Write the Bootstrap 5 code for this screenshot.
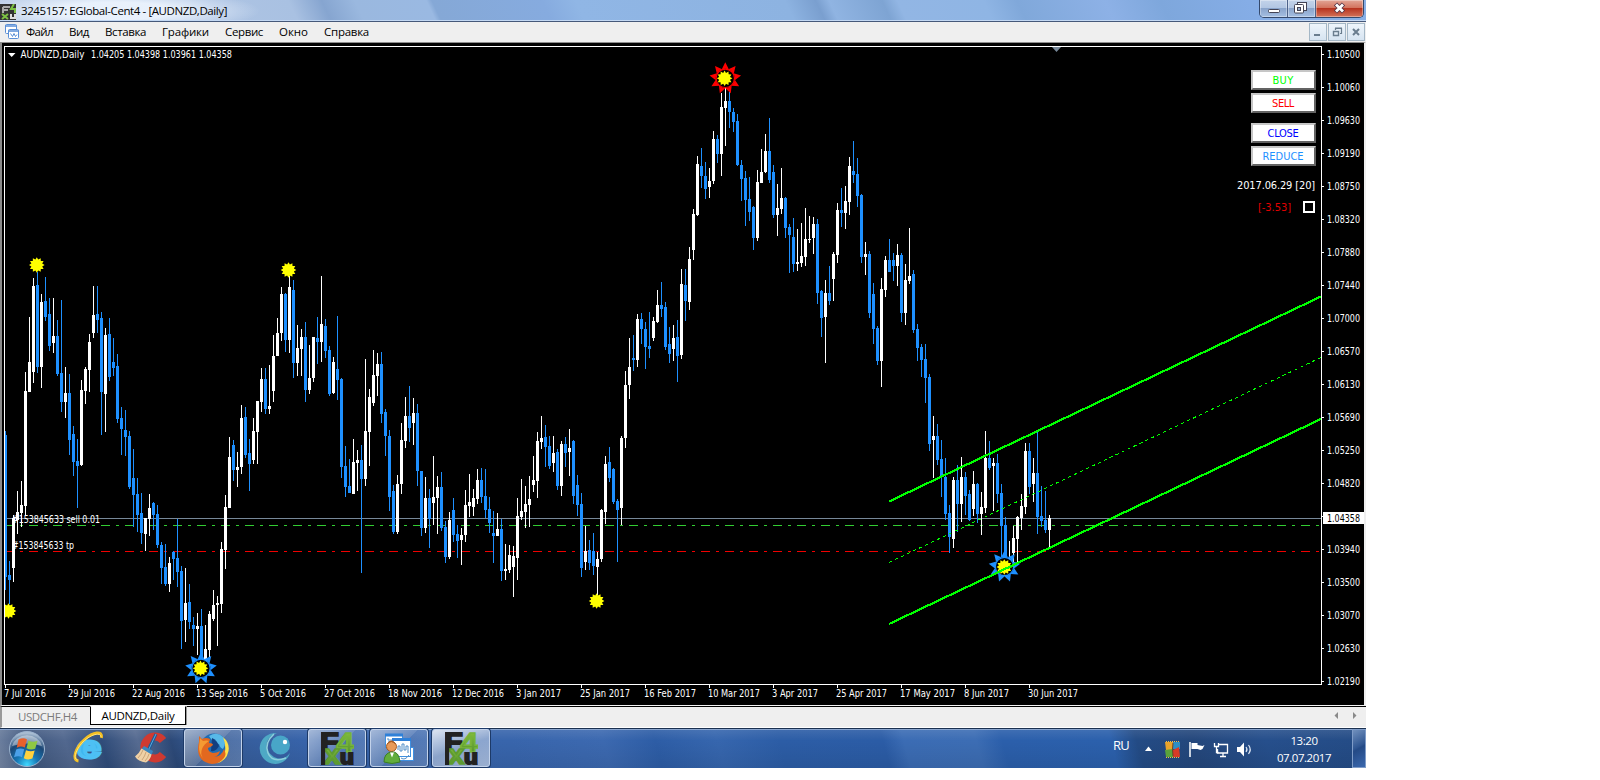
<!DOCTYPE html>
<html lang="ru">
<head>
    <meta charset="UTF-8">
    <meta name="viewport" content="width=device-width, initial-scale=1.0">
    <title>3245157: EGlobal-Cent4 - [AUDNZD,Daily]</title>
    <link href="https://cdn.jsdelivr.net/npm/bootstrap@5.3.0/dist/css/bootstrap.min.css" rel="stylesheet">
    <style>
        body {
            font-family: "Open Sans", "Noto Sans", sans-serif;
            font-size: 11.5px;
            line-height: 1;
            color: #000;
            background: #fff;
        }
        .desktop {
            width: 1366px;
            height: 768px;
            overflow: hidden;
        }
        .fit {
            display: inline-block;
            white-space: nowrap;
        }
        svg {
            display: block;
            flex: none;
        }

        /* window caption */
        .titlebar {
            height: 22px;
            border-bottom: 1px solid #46597a;
            box-shadow: inset 0 -1px #c3d8f3;
            background:
                radial-gradient(ellipse 145px 22px at 115px 11px, rgba(235,243,253,.95) 40%, rgba(225,236,250,0) 100%),
                linear-gradient(65deg, #b9cbe6 0, #a9c1e2 270px, #86a5d0 300px, #9ab8df 330px, #9ab9e2 395px, #85a8d6 400px, #86abdf 500px, #90b6e5 530px, #8db3e1 720px, #7a9fcf 748px, #90b4e2 760px, #7ea4d3 808px, #92b6e4 822px, #8fb5e4 900px, #80a8da 930px, #8db1e6 1010px, #7ea7dc 1060px, #85ade6 1140px, #8db2e6 1366px);
        }
        .title-text {
            padding: 5px 0 0 5px;
        }
        .caption-box {
            height: 18px;
            margin-right: 2px;
            border: 1px solid #34496c;
            border-top: 0;
            border-radius: 0 0 5px 5px;
            overflow: hidden;
        }
        .cap-btn {
            width: 28px;
            height: 17px;
            border-right: 1px solid #4c6189;
            background: linear-gradient(#c3d3ea 0, #b3c7e3 45%, #8aa4cb 50%, #a5bfe2 100%);
            box-shadow: inset 0 0 0 1px rgba(255,255,255,.35);
        }
        .cap-close {
            width: 47px;
            border-right: 0;
            background: linear-gradient(#e2a697 0, #d3745f 45%, #b73420 50%, #d3735a 100%);
        }

        /* menu */
        .menubar {
            height: 20px;
            background: #efefef;
        }
        .menubar .fit {
            margin-right: 16px;
        }
        .mdi-btns {
            gap: 1px;
            margin-right: 1px;
        }
        .mdi-btn {
            width: 18px;
            height: 18px;
            border: 1px solid #a4b7c6;
            background: linear-gradient(#eef5fb, #d6e4f1);
        }

        /* chart */
        .chart-frame {
            height: 664px;
            border-top: 1px solid #8d8d8d;
            border-left: 2px solid #8a8a8a;
            border-right: 2px solid #efefef;
            border-bottom: 1px solid #f4f4f4;
            background: #000;
        }
        .chart-text {
            font-family: "DejaVu Sans Condensed", "DejaVu Sans", sans-serif;
            font-stretch: condensed;
            font-size: 10px;
            fill: #fff;
        }
        .trade-panel {
            position: absolute;
            top: 27px;
            right: 48px;
            width: 90px;
            font-family: "DejaVu Sans Condensed", "DejaVu Sans", sans-serif;
            font-stretch: condensed;
            font-size: 11px;
            color: #fff;
        }
        .trade-btn {
            width: 65px;
            height: 20px;
            padding-right: 1px;
            background: #fff;
            border: 2px solid;
            border-color: #c6c6c6 #636363 #636363 #c6c6c6;
        }
        .panel-info {
            margin-right: 1px;
        }
        .gap-3px {
            margin-bottom: 3px;
        }
        .gap-10px {
            margin-bottom: 10px;
        }
        .clr-buy { color: #0f0; }
        .clr-sell { color: #f00; }
        .clr-close { color: #00f; }
        .clr-reduce { color: #1e90ff; }
        .clr-loss { color: #e00000; }
        .opt-box {
            width: 12px;
            height: 12px;
            border: 2px solid #fff;
        }

        /* chart tabs */
        .chart-tabs {
            height: 22px;
            background: #efefef;
            border-top: 1px solid #000;
            border-left: 2px solid #999;
            border-bottom: 1px solid #fff;
        }
        .tab-idle {
            width: 88px;
            height: 19px;
            color: #7b7b7b;
        }
        .tab-live {
            width: 96px;
            height: 19px;
            margin-top: -1px;
            background: #fff;
            border: 1px solid #000;
            border-top-color: #fff;
            box-shadow: 1px 0 #999;
        }

        /* taskbar */
        .taskbar {
            height: 40px;
            border-top: 1px solid #1b3150;
            box-shadow: inset 0 1px #8aa6cf;
            background:
                linear-gradient(rgba(255,255,255,.10), rgba(255,255,255,0) 30%, rgba(0,0,0,.08)),
                linear-gradient(75deg, #7587a5 0, #40587f 35px, #52688f 70px, #2f4c7a 105px, #566b91 140px, #2c4978 172px, #355a94 200px, #3763a9 300px, #3865ac 500px, #3c69b0 590px, #2d5da6 640px, #3666ae 700px, #2c5da6 760px, #2b5ca6 860px, #3b6cb4 880px, #3c6db4 950px, #2b5fab 975px, #2b60ac 1080px, #234b85 1105px, #24477c 1160px, #264f8c 1230px, #234a83 1366px);
        }
        .task-slot {
            width: 58px;
            height: 38px;
            margin: 0 4px 0 0;
        }
        .task-open {
            border: 1px solid #c2d2ea;
            border-radius: 3px;
            box-shadow: 0 0 0 1px #1d3a68;
            background: linear-gradient(135deg, rgba(255,255,255,.5), rgba(255,255,255,.22) 50%, rgba(255,255,255,.12) 51%, rgba(255,255,255,.18));
        }
        .task-active {
            background: linear-gradient(160deg, rgba(255,255,255,.8), rgba(255,255,255,.42) 50%, rgba(255,255,255,.5));
        }
        .start-slot {
            width: 60px;
            padding-left: 8px;
        }
        .tray {
            color: #fff;
        }
        .lang {
            margin: 10px 16px 0 0;
            font-size: 13px;
        }
        .clock {
            width: 78px;
            padding-top: 3px;
            line-height: 17px;
        }
        .show-desktop {
            width: 14px;
            margin-left: 9px;
            border: 1px solid #7f9cc8;
            background: linear-gradient(150deg, #7190bd, #2f5692 45%, #244a86 50%, #3b68ae);
        }
    </style>
</head>
<body>
    <!-- shared symbols -->
    <svg width="0" height="0" class="position-absolute">
        <defs>
            <linearGradient id="leaf" x1="0" y1="0" x2="0" y2="1">
                <stop offset="0" stop-color="#8cc63f"/>
                <stop offset="1" stop-color="#4c8a2c"/>
            </linearGradient>
            <symbol id="fxLogo" viewBox="0 0 32 32">
                <g font-family="Liberation Sans, sans-serif" font-weight="bold">
                    <text x="-1" y="17" font-size="23" fill="#222" stroke="#222" stroke-width="2" textLength="18" lengthAdjust="spacingAndGlyphs">F</text>
                    <text x="15" y="19" font-size="26" fill="url(#leaf)" stroke="#76b43a" stroke-width="1.400" textLength="17" lengthAdjust="spacingAndGlyphs">4</text>
                    <text x="3" y="31.500" font-size="26" fill="url(#leaf)" stroke="#5d9b31" stroke-width="1.600" textLength="16" lengthAdjust="spacingAndGlyphs">x</text>
                    <text x="18.500" y="31" font-size="20" fill="#222" stroke="#222" stroke-width="2" textLength="13.500" lengthAdjust="spacingAndGlyphs">u</text>
                </g>
                <rect x="0" y="15" width="4" height="17" fill="#222"/>
            </symbol>
        </defs>
    </svg>

    <div class="desktop d-flex flex-column">
        <!-- Caption -->
        <div class="titlebar d-flex justify-content-between align-items-start">
            <div class="d-flex">
                <svg width="16" height="16" class="mt-1"><rect width="16" height="16" fill="#333"/><path d="M3 3h7M3 3v6M3 6h5" stroke="#aaa" stroke-width="2" fill="none"/><path d="M14 0l-3 5h4v4M2 10l6 5M8 10l-6 5" stroke="#7cc142" stroke-width="2" fill="none"/><path d="M11 10v4h4v-4" stroke="#ddd" stroke-width="2" fill="none"/></svg>
                <span class="fit title-text" data-w="206">3245157: EGlobal-Cent4 - [AUDNZD,Daily]</span>
            </div>
            <div class="caption-box d-flex">
                <div class="cap-btn"><svg width="27" height="17"><rect x="8.500" y="9.500" width="11" height="3" rx="1" fill="#fff" stroke="#445"/></svg></div>
                <div class="cap-btn"><svg width="27" height="17"><rect x="9.500" y="2.500" width="9" height="8" fill="#fff" stroke="#445"/><rect x="6.500" y="4.500" width="9" height="8.500" rx="1" fill="#fff" stroke="#445"/><rect x="9.500" y="7.500" width="3" height="3" fill="#9bb0d0" stroke="#445"/></svg></div>
                <div class="cap-btn cap-close"><svg width="47" height="17"><path d="M19.500 4l8 8M27.500 4l-8 8" stroke="#534" stroke-width="4.500"/><path d="M20 4.500l7 7M27 4.500l-7 7" stroke="#fff" stroke-width="2.800"/></svg></div>
            </div>
        </div>

        <!-- Menu -->
        <div class="menubar d-flex justify-content-between align-items-center">
            <div class="d-flex align-items-center">
                <svg width="26" height="16"><g fill="#fff" stroke="#5a8fd6"><rect x="5.500" y=".5" width="11" height="9" rx="1"/><rect x="8.500" y="5.500" width="10" height="9" rx="1"/></g><path d="M5 2h12M8 7h11" stroke="#5a8fd6" stroke-width="1.500"/><path d="M10.500 9.500l2 3 1.500-3 1.500 3 1.500-2" fill="none" stroke="#5a8fd6"/></svg>
                <span class="fit" data-w="27">Файл</span>
                <span class="fit" data-w="20">Вид</span>
                <span class="fit" data-w="41">Вставка</span>
                <span class="fit" data-w="47">Графики</span>
                <span class="fit" data-w="38">Сервис</span>
                <span class="fit" data-w="29">Окно</span>
                <span class="fit" data-w="45">Справка</span>
            </div>
            <div class="mdi-btns d-flex">
                <div class="mdi-btn"><svg width="16" height="16"><path d="M4 11h6" stroke="#6a7d8e" stroke-width="2"/></svg></div>
                <div class="mdi-btn"><svg width="16" height="16"><path d="M6.500 6V4.500h6v5H11M6 4h7" fill="none" stroke="#6a7d8e" stroke-width="1.200"/><path d="M4.500 7.500h5v4h-5zM4 7.500h6" fill="none" stroke="#6a7d8e" stroke-width="1.400"/></svg></div>
                <div class="mdi-btn"><svg width="16" height="16"><path d="M5 5l6 6M11 5l-6 6" stroke="#6a7d8e" stroke-width="2"/></svg></div>
            </div>
        </div>

        <!-- Chart -->
        <div class="chart-frame position-relative">
            <svg id="chart" width="1362" height="662" viewBox="2 43 1362 662"></svg>
            <div class="trade-panel d-flex flex-column align-items-end">
                <div class="trade-btn clr-buy gap-3px d-flex align-items-center justify-content-center"><span class="fit" data-w="21">BUY</span></div>
                <div class="trade-btn clr-sell gap-10px d-flex align-items-center justify-content-center"><span class="fit" data-w="22">SELL</span></div>
                <div class="trade-btn clr-close gap-3px d-flex align-items-center justify-content-center"><span class="fit" data-w="31">CLOSE</span></div>
                <div class="trade-btn clr-reduce gap-10px d-flex align-items-center justify-content-center"><span class="fit" data-w="41">REDUCE</span></div>
                <span class="fit panel-info gap-10px mt-1" data-w="78">2017.06.29 [20]</span>
                <div class="panel-info d-flex align-items-center">
                    <span class="fit clr-loss me-2 pe-1" data-w="33">[-3.53]</span>
                    <div class="opt-box"></div>
                </div>
            </div>
        </div>

        <!-- Chart tabs -->
        <div class="chart-tabs d-flex justify-content-between">
            <div class="d-flex">
                <div class="tab-idle d-flex align-items-center ps-3"><span class="fit" data-w="59">USDCHF,H4</span></div>
                <div class="tab-live d-flex align-items-center justify-content-center"><span class="fit" data-w="73">AUDNZD,Daily</span></div>
            </div>
            <svg width="36" height="20"><path d="M8 5v7L4.500 8.500zM23 5v7l3.500-3.500z" fill="#8a8a8a"/></svg>
        </div>

        <!-- Taskbar -->
        <div class="taskbar d-flex justify-content-between">
            <div class="d-flex">
                <div class="start-slot d-flex align-items-center">
                    <svg width="38" height="38">
                        <defs><radialGradient id="orb" cx=".5" cy=".95" r=".9"><stop offset="0" stop-color="#3fd8ff"/><stop offset=".35" stop-color="#1576b4"/><stop offset=".7" stop-color="#1c4775"/><stop offset="1" stop-color="#a9bdd2"/></radialGradient></defs>
                        <circle cx="19" cy="19" r="17.500" fill="url(#orb)" stroke="#9db4cf"/>
                        <path d="M4 16a15.500 14.500 0 0 1 30 0q-15-5-30 0z" fill="#fff" opacity=".4"/>
                        <path d="M10.500 9.500q5-2.500 8.500 0l-2.200 8q-4-2-8 .2z" fill="#e8612c"/>
                        <path d="M20.500 10.500q4 2.300 9 .3l-2.300 8q-4.500 1.700-8.700-.5z" fill="#8fc843"/>
                        <path d="M8.200 19.500q4-2 8-.2l-2.200 8q-3.500-2-8 0z" fill="#4ba0e8"/>
                        <path d="M18 20.200q4.500 2 8.700.4l-2.300 8q-4.500 1.800-8.600-.4z" fill="#ffd23e"/>
                    </svg>
                </div>
                <div class="task-slot d-flex align-items-center justify-content-center">
                    <svg width="34" height="38" overflow="visible">
                        <text x="5" y="29" font-family="Liberation Sans, sans-serif" font-weight="bold" font-size="32" fill="#3fb6ee" stroke="#4dc0f4" stroke-width="3" textLength="24" lengthAdjust="spacingAndGlyphs">e</text>
                        <path d="M6.500 32C-1 31 4 18 12.500 10.500S31 1 29.500 9" fill="none" stroke="#f4bf22" stroke-width="2.800"/>
                        <path d="M5.500 31C0 30 5 18 12.500 11.500S29 3 29 8" fill="none" stroke="#ffe477" stroke-width="1"/>
                    </svg>
                </div>
                <div class="task-slot d-flex align-items-center justify-content-center">
                    <svg width="34" height="34">
                        <path d="M29 9.500A10.500 11 0 1 0 29 23.500" fill="none" stroke="#cf3a31" stroke-width="8"/>
                        <path d="M22 3l-8 17" stroke="#1c5b96" stroke-width="3"/>
                        <path d="M22 3l-8 17" stroke="#5ba7dc" stroke-width="1"/>
                        <path d="M10 15l9 5-1.500 4-10-6z" fill="#3a86bf"/>
                        <path d="M7.500 17.500l10 6q-1 5-5.500 8-8-1-11-6 4-3 6.500-8z" fill="#f0d1a6"/>
                        <path d="M9 19q-2 5-5 8M12 21q-1 4-4 8M15 23q-1 4-4 7" stroke="#cda577" fill="none"/>
                    </svg>
                </div>
                <div class="task-slot task-open d-flex align-items-center justify-content-center">
                    <svg width="32" height="32">
                        <circle cx="17" cy="15" r="13.500" fill="#1f6cb4"/>
                        <path d="M12 4q8-5 14 1 4 6 0 12-3-1-4-5-6-1-10-8z" fill="#58b9e8"/>
                        <path d="M15 6q5 2 7 8-3 6-8 5z" fill="#123f80"/>
                        <path d="M26 5q7 6 5.500 14-2 10-12 12.500 8-4 8.500-12 1-7-2-14.500z" fill="#ffe14a"/>
                        <path d="M2 4l3 3q4-2 8 0l-1 4q4 0 4 2-2 2-5 3 0 4 5 5 4 0 7-2-1 5-6 6 8-1 10-8 3 5 0 9-5 6-12 6Q1 30 1 17q0-4 1-7z" fill="#e2681f"/>
                        <path d="M3 6l3 3q4-1 6 0-5 3-7 8-2 5 1 9-4-4-4-11z" fill="#f59a32"/>
                    </svg>
                </div>
                <div class="task-slot d-flex align-items-center justify-content-center">
                    <svg width="32" height="32">
                        <path d="M18 1A15.500 15.500 0 1 0 31 21Q24 30 15 25 6 19 8 10 11 3 18 1z" fill="#4ea9c5"/>
                        <path d="M15 2Q5 11 9 21T27 26" fill="none" stroke="#8fd0dc" stroke-width="1.500"/>
                        <circle cx="21.500" cy="13" r="9.500" fill="#48a6c8"/>
                        <circle cx="26" cy="10" r="2.200" fill="#fff"/>
                    </svg>
                </div>
                <div class="task-slot task-open d-flex align-items-center justify-content-center">
                    <svg width="33" height="33"><use href="#fxLogo"/></svg>
                </div>
                <div class="task-slot task-open d-flex align-items-center justify-content-center">
                    <svg width="32" height="32">
                        <g fill="#fff" stroke="#3f8fdf"><rect x="2.500" y="2.500" width="17" height="13"/><rect x="14.500" y="15.500" width="16" height="13"/><rect x="9.500" y="6.500" width="18" height="18"/></g>
                        <path d="M2 3h18M9 7.500h19" stroke="#2f80d8" stroke-width="3"/>
                        <path d="M4 7h2v5M8 7v4M15 18v-4h2v5h2v-7h2v6h2v-4h2v7M18 26q4 3 8-3" fill="none" stroke="#5590c8"/>
                        <circle cx="8.500" cy="14.500" r="5" fill="#e89a58" stroke="#a65a22"/>
                        <path d="M4 13q4-6 9 0-2-5-5-4.500T4 13z" fill="#a65a22"/>
                        <path d="M1 30q0-9 7.500-10t8.500 10q-8 3-16 0z" fill="#62ad3c" stroke="#3c7f25"/>
                        <path d="M7 20.500l2 5 2-5z" fill="#fff"/>
                    </svg>
                </div>
                <div class="task-slot task-open task-active d-flex align-items-center justify-content-center">
                    <svg width="33" height="33"><use href="#fxLogo"/></svg>
                </div>
            </div>
            <div class="tray d-flex">
                <span class="fit lang" data-w="16">RU</span>
                <svg width="19" height="39"><path d="M0 22L3.500 17.500 7 22z" fill="#fff"/></svg>
                <svg width="25" height="39">
                    <path d="M1 13h8v8H2z" fill="#e8a32c"/><path d="M9 13h7v7H9z" fill="#2d8fc4"/>
                    <path d="M1 21l8-1v8H2z" fill="#5aa33b"/><path d="M9 21l6-3 1 10H9z" fill="#d83a26"/>
                    <path d="M2 12.500h13M2 28.500h13" stroke="#f0c14a" stroke-dasharray="1 1"/>
                    <path d="M9 14q-1 6 0 13" stroke="#6a3f25" fill="none"/>
                </svg>
                <svg width="24" height="39"><path d="M1 13v15" stroke="#fff" stroke-width="1.500"/><path d="M2.500 14h6v2l5 1 2-1-2 4-2 1-3-1h-6z" fill="#fff"/></svg>
                <svg width="23" height="39"><g fill="none" stroke="#fff" stroke-width="1.300"><path d="M6 15.500h8.500v8.500h-10v-4M7 27.500h6M10 24v3"/><path d="M1.500 14v3.500h4V14M3.500 17.500v6h2"/></g></svg>
                <svg width="29" height="39"><path d="M1 18h3l4-4.500v14L4 23H1z" fill="#fff"/><path d="M10 18q2 2.500 0 5M12.500 16q3.500 4.500 0 9" fill="none" stroke="#dfe8f5" stroke-width="1.200"/></svg>
                <div class="clock text-center"><div><span class="fit" data-w="27">13:20</span></div><div><span class="fit" data-w="54">07.07.2017</span></div></div>
                <div class="show-desktop"></div>
            </div>
        </div>
    </div>

    <script src="https://cdn.jsdelivr.net/npm/bootstrap@5.3.0/dist/js/bootstrap.bundle.min.js"></script>
    <script>
        // Daily bars: colour (w = up, b = down), high, body top, body bottom, low
        const bars = `b431,435,577,590 b561,575,580,604 w515,518,568,582 w491,512,520,534 w481,505,513,527 w372,391,506,516
            w317,362,392,392 w278,286,372,383 b272,285,367,373 w294,302,367,388 b277,301,317,321 b298,314,346,351 w298,336,343,353
            b320,336,374,376 b300,373,402,412 w367,393,402,418 b374,393,440,455 b426,434,462,476 b439,461,466,508 w380,390,465,466
            w367,369,391,404 w334,342,370,392 w286,315,333,338 b286,314,320,333 b312,318,392,435 w328,335,394,432 b318,334,377,381
            b338,362,368,376 b354,366,419,423 b407,418,429,455 b410,430,437,456 b431,436,487,489 b449,478,495,527 b478,494,515,532
            b493,513,533,544 w518,518,534,551 w494,508,519,536 b502,503,515,530 b505,514,545,548 b542,545,568,584 b544,567,584,586
            w557,563,584,592 b551,552,559,580 b519,558,572,587 b566,571,621,649 w568,603,620,642 b584,602,622,629 b617,625,629,646
            w613,626,629,655 b609,626,660,663 w625,649,663,665 w611,614,650,657 w590,605,619,621 w596,603,605,646 w542,549,604,613
            w495,507,550,569 w437,457,508,508 b440,445,470,481 w452,467,470,487 w405,418,467,474 b407,417,455,458 b439,453,464,491
            w418,431,460,464 w401,401,432,464 w368,379,402,412 b368,379,409,414 w365,406,409,414 w335,356,391,402 w318,333,356,356
            w287,294,333,341 b293,294,340,352 w276,287,340,353 b280,290,363,378 w325,348,363,376 w329,337,349,376 b322,337,390,402
            w345,378,390,394 w337,337,378,382 b317,338,342,364 w276,324,342,362 b319,326,351,358 b346,350,394,396 w357,362,393,394
            b316,369,380,400 b378,379,467,478 b446,466,487,497 b459,486,493,493 w439,462,494,494 w450,460,463,491 b445,460,479,573
            w359,431,479,486 w389,397,432,466 w350,375,403,406 w353,364,376,396 b352,364,414,423 b409,412,436,456 b430,436,497,511
            b485,491,532,534 w475,484,532,534 w423,440,484,494 w397,416,441,448 b386,416,428,442 w398,413,423,445 b404,413,471,486
            b471,471,528,536 w477,498,528,533 b489,498,519,548 w456,497,503,525 w476,487,498,534 b472,487,528,531 b521,527,557,563
            w512,520,557,559 b498,510,535,542 b525,534,541,558 w528,535,540,565 w490,505,535,542 w474,502,506,517 w489,498,507,516
            w469,480,499,504 b468,480,497,503 b469,496,510,518 b497,509,523,533 b511,533,536,563 w513,529,536,536 b519,529,571,581
            w544,569,571,580 w545,555,570,573 w546,556,567,597 w498,516,558,580 w479,511,517,520 w486,504,512,528 w476,499,505,527
            w456,480,485,492 w432,441,481,498 w416,438,442,449 b425,437,447,467 b436,446,466,469 w436,453,463,472 b449,452,486,490
            w441,444,486,496 b437,444,453,467 w429,448,452,476 b440,441,496,504 b475,485,505,516 b493,504,568,577 w526,551,562,570
            b540,550,563,570 b533,551,566,575 w552,559,567,595 w509,510,559,562 w456,464,512,524 b447,462,478,482 b468,469,502,504
            b499,501,510,562 w436,438,508,525 w371,385,438,448 w338,367,385,399 b335,358,360,371 w314,319,360,367 b313,319,329,344
            b322,329,347,369 b312,346,349,358 w317,321,338,341 w290,305,322,323 b282,305,309,317 b302,307,347,350 b327,344,354,363
            w325,338,349,361 b320,337,356,382 w269,284,355,359 b269,285,301,321 w247,259,302,310 w209,214,250,260 w156,164,215,216
            b148,166,176,188 b162,176,189,199 w168,181,187,198 w131,139,181,184 b135,139,154,163 w93,107,154,176 w85,101,108,146
            b92,101,112,128 b108,112,122,132 b114,121,165,166 b160,165,179,201 b171,178,200,226 b177,199,212,221 b206,207,238,250
            w170,182,238,241 w149,172,183,183 w134,151,172,173 b118,151,180,183 b165,172,215,218 w184,208,215,236 w168,198,209,214
            b197,198,228,238 b224,227,235,273 b218,237,264,272 w229,262,264,271 w223,256,263,267 w208,239,257,266 w216,239,240,243
            w217,224,238,254 b219,224,293,304 b290,291,318,337 w280,293,317,363 b266,293,301,305 w252,254,279,301 w203,210,255,263
            b188,210,213,227 w186,201,213,229 w157,166,202,215 b141,171,175,183 b158,174,196,207 b194,195,257,263 w242,254,257,275
            b251,254,313,318 b283,294,329,344 b326,328,361,365 w278,289,361,387 w256,260,290,297 b239,260,272,272 b253,260,266,281
            w244,255,266,286 b253,255,313,322 w264,280,313,325 w228,276,281,284 b270,274,330,333 b324,329,348,361 b344,347,360,377
            b344,359,378,403 b374,377,444,451 w416,436,440,478 b424,436,460,465 b440,459,477,497 b458,477,514,520 b505,513,537,553
            w477,480,539,548 b465,480,504,532 w457,477,504,522 b472,477,496,515 b490,494,520,521 w471,484,509,516 b483,484,514,523
            w492,507,514,535 w431,458,508,513 b441,458,468,470 w458,463,466,511 b454,463,494,503 b484,493,526,557 b517,525,560,563
            w541,559,563,566 w526,538,553,563 w516,517,539,562 w494,506,518,530 w443,451,507,514 b443,451,487,494 w458,473,484,502
            b432,473,517,534 b486,516,521,527 b491,520,530,533 w515,518,530,548`.split(/\s+/);

        const prices = ['1.10500', '1.10060', '1.09630', '1.09190', '1.08750', '1.08320', '1.07880', '1.07440', '1.07000', '1.06570',
            '1.06130', '1.05690', '1.05250', '1.04820', '', '1.03940', '1.03500', '1.03070', '1.02630', '1.02190'];
        const dates = [['7 Jul 2016', 42], ['29 Jul 2016', 47], ['22 Aug 2016', 53], ['13 Sep 2016', 52], ['5 Oct 2016', 46],
            ['27 Oct 2016', 51], ['18 Nov 2016', 54], ['12 Dec 2016', 52], ['3 Jan 2017', 45], ['25 Jan 2017', 50], ['16 Feb 2017', 52],
            ['10 Mar 2017', 52], ['3 Apr 2017', 46], ['25 Apr 2017', 51], ['17 May 2017', 55], ['8 Jun 2017', 45], ['30 Jun 2017', 50]];

        const label = (x, y, text, width, extra = '') =>
            `<text class="chart-text" x="${x}" y="${y}" textLength="${width}" lengthAdjust="spacingAndGlyphs" ${extra}>${text}</text>`;

        // Small yellow sun marker
        function sun(cx, cy) {
            let pts = '';
            for (let k = 0; k < 24; k++) {
                const r = k % 2 ? 5.6 : 7.8;
                const a = k * Math.PI / 12;
                pts += `${(cx + r * Math.sin(a)).toFixed(1)},${(cy - r * Math.cos(a)).toFixed(1)} `;
            }
            return `<polygon points="${pts}" fill="#ff0"/>`;
        }

        // Ring of nine rays round a strong extremum
        function halo(cx, cy, colour) {
            let out = `<circle cx="${cx}" cy="${cy}" r="9.200" fill="#000" stroke="${colour}" stroke-width="1.200"/>`;
            for (let k = 0; k < 9; k++) {
                out += `<path d="M${cx - 3.5} ${cy - 9}L${cx} ${cy - 16}L${cx + 3.5} ${cy - 9}Q${cx} ${cy - 10} ${cx - 3.5} ${cy - 9}" fill="${colour}" transform="rotate(${k * 40} ${cx} ${cy})"/>`;
            }
            return out;
        }

        function draw() {
            let out = '<g shape-rendering="crispEdges">';
            // bid and order levels
            out += '<path d="M5 518.500H1321" stroke="#778899"/>';
            out += '<path d="M5 525.500H1321" stroke="#32cd32" stroke-dasharray="9 6 3 6"/>';
            out += '<path d="M5 551.500H1321" stroke="#f00000" stroke-dasharray="9 6 3 6"/>';
            // candles
            bars.forEach((bar, i) => {
                const [high, top, bottom, low] = bar.slice(1).split(',').map(Number);
                const colour = bar[0] === 'w' ? '#fff' : '#1e90ff';
                const x = 5 + 4 * i;
                out += `<rect x="${x}" y="${high}" width="1" height="${Math.max(low - high, 1)}" fill="${colour}"/>`;
                out += `<rect x="${i ? x - 1 : x}" y="${top}" width="${i ? 3 : 2}" height="${Math.max(bottom - top, 1)}" fill="${colour}"/>`;
            });
            // frame and ticks
            out += '<path d="M4.500 684V46.500H1321.500V684.500H4" fill="none" stroke="#fff"/>';
            prices.forEach((p, i) => out += `<rect x="1322" y="${54 + 33 * i}" width="2" height="1" fill="#fff"/>`);
            dates.forEach((d, i) => out += `<rect x="${5 + 64 * i}" y="685" width="1" height="3" fill="#fff"/>`);
            out += '<rect x="1323" y="512" width="41" height="12" fill="#fff"/></g>';
            out += '<path d="M1052 47h9l-4.500 5z" fill="#778899"/><path d="M8 53h7.500L11.700 57z" fill="#fff"/>';

            // extremum markers
            out += '<clipPath id="plot"><rect x="5" y="47" width="1316" height="637"/></clipPath><g clip-path="url(#plot)">';
            out += halo(725.3, 78.3, '#f00') + halo(201, 668.3, '#1e90ff') + halo(1004.5, 566.5, '#1e90ff');
            [[8.5, 611], [36.8, 265], [200.5, 668.3], [288.5, 270], [596.6, 601], [724.6, 78.3], [1004.3, 567]].forEach(p => out += sun(...p));
            // regression channel
            out += '<g fill="none" stroke="#0f0" shape-rendering="crispEdges">';
            out += '<path d="M889 501.500L1321 296.500M889 624L1321 419" stroke-width="2.200"/>';
            out += '<path d="M889 562.500L1321 357.500" stroke-dasharray="3.300 3.300"/></g></g>';

            // labels
            out += label(20.5, 58, 'AUDNZD,Daily', 64) + label(91, 58, '1.04205 1.04398 1.03961 1.04358', 141);
            out += label(12, 523, '#153845633 sell 0.01', 88) + label(12, 549, '#153845633 tp', 62);
            prices.forEach((p, i) => { if (p) out += label(1327, 58 + 33 * i, p, 33); });
            out += label(1327, 522, '1.04358', 33, 'style="fill:#000"');
            dates.forEach(([text, width], i) => out += label(4 + 64 * i, 697, text, width));
            document.getElementById('chart').innerHTML = out;
        }

        // Tighten or loosen tracking so each caption takes its set width
        function fitText() {
            document.querySelectorAll('.fit').forEach(el => {
                const range = document.createRange();
                range.selectNodeContents(el);
                const gap = (el.dataset.w - range.getBoundingClientRect().width) / el.textContent.length;
                el.style.letterSpacing = gap.toFixed(3) + 'px';
            });
        }

        draw();
        fitText();
    </script>
</body>
</html>
